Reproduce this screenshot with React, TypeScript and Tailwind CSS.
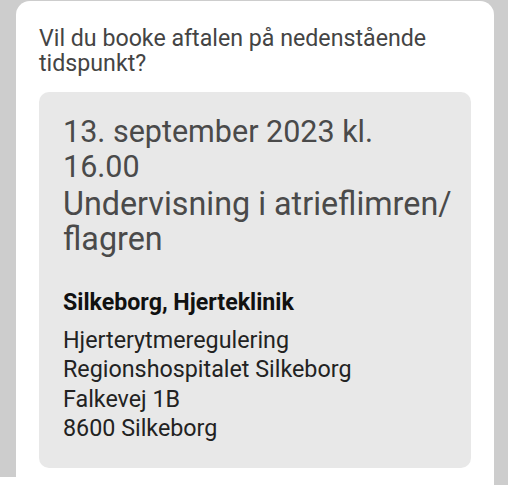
export default function App() {
  return (
    <div className="flex h-[485px] w-[508px] bg-white font-['Roboto',sans-serif]">
      <div className="h-[477px] w-[16px] bg-[#cdcdcd]" />
      <div className="flex-1 bg-[#cdcdcd] pt-px">
        <div className="h-full rounded-t-[14px] bg-white px-[23px] pt-[25px]">
          <p className="text-[23.2px] leading-[25px] text-[#444444]">
            Vil du booke aftalen på nedenstående tidspunkt?
          </p>
          <div className="mt-[16px] rounded-[10px] bg-[#e8e8e8] pl-[24px] pr-[16px] pt-[23px] pb-[24px]">
            <h2 className="text-[30.5px] leading-[34.5px] text-[#4a4a4a]">
              13. september 2023 kl. 16.00
            </h2>
            <h3 className="mt-[3px] text-[32.3px] leading-[34.5px] text-[#4a4a4a]">
              Undervisning i atrieflimren/ flagren
            </h3>
            <div className="mt-[32px] text-[23.2px] font-bold leading-[29.5px] text-[#111111]">
              Silkeborg, Hjerteklinik
            </div>
            <div className="mt-[8px] text-[23.3px] leading-[29.5px] text-[#222222]">
              <div>Hjerterytmeregulering</div>
              <div>Regionshospitalet Silkeborg</div>
              <div>Falkevej 1B</div>
              <div>8600 Silkeborg</div>
            </div>
          </div>
        </div>
      </div>
      <div className="w-[14px] bg-[#cdcdcd]" />
    </div>
  );
}
